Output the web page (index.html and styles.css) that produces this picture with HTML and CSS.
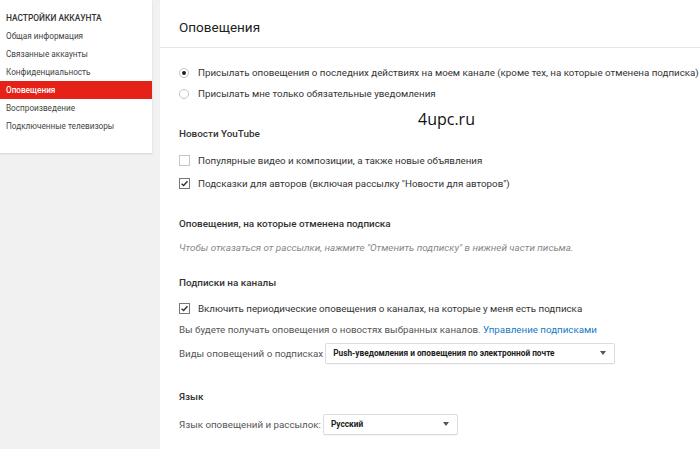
FILE: index.html
```html
<!DOCTYPE html>
<html lang="ru">
<head>
<meta charset="utf-8">
<link rel="stylesheet" href="styles.css">
</head>
<body>
<div class="page">
  <aside class="sidebar">
    <div class="side-panel">
      <div class="side-head">НАСТРОЙКИ АККАУНТА</div>
      <div class="side-item">Общая информация</div>
      <div class="side-item">Связанные аккаунты</div>
      <div class="side-item">Конфиденциальность</div>
      <div class="side-item active">Оповещения</div>
      <div class="side-item">Воспроизведение</div>
      <div class="side-item">Подключенные телевизоры</div>
    </div>
  </aside>
  <main class="main">
    <div class="title">Оповещения</div>
    <div class="content">
      <div class="watermark">4upc.ru</div>
      <div class="row radio-row first">
        <span class="radio checked"></span>
        <span>Присылать оповещения о последних действиях на моем канале (кроме тех, на которые отменена подписка)</span>
      </div>
      <div class="row radio-row">
        <span class="radio"></span>
        <span>Присылать мне только обязательные уведомления</span>
      </div>

      <div class="row heading h-news">Новости YouTube</div>
      <div class="row cb-row cb-first">
        <span class="cb"></span>
        <span>Популярные видео и композиции, а также новые объявления</span>
      </div>
      <div class="row cb-row">
        <span class="cb checked"><svg viewBox="0 0 10 10" width="9" height="9"><path d="M1.8 5.2 L4 7.3 L8.3 2.6" fill="none" stroke="#333" stroke-width="1.6"/></svg></span>
        <span>Подсказки для авторов (включая рассылку "Новости для авторов")</span>
      </div>

      <div class="row heading h-unsub">Оповещения, на которые отменена подписка</div>
      <div class="row note">Чтобы отказаться от рассылки, нажмите "Отменить подписку" в нижней части письма.</div>

      <div class="row heading h-subs">Подписки на каналы</div>
      <div class="row cb-row cb-subs">
        <span class="cb checked"><svg viewBox="0 0 10 10" width="9" height="9"><path d="M1.8 5.2 L4 7.3 L8.3 2.6" fill="none" stroke="#333" stroke-width="1.6"/></svg></span>
        <span>Включить периодические оповещения о каналах, на которые у меня есть подписка</span>
      </div>
      <div class="row text-row">Вы будете получать оповещения о новостях выбранных каналов.&nbsp;<a class="link">Управление подписками</a></div>
      <div class="row select-row sel-types">
        <span class="label">Виды оповещений о подписках</span>
        <span class="select wide"><span>Push-уведомления и оповещения по электронной почте</span><span class="caret"></span></span>
      </div>

      <div class="row heading h-lang">Язык</div>
      <div class="row select-row sel-lang">
        <span class="label">Язык оповещений и рассылок:</span>
        <span class="select narrow"><span>Русский</span><span class="caret"></span></span>
      </div>
    </div>
  </main>
</div>
</body>
</html>
```
FILE: styles.css
```css
* { box-sizing: border-box; }
html, body { margin: 0; padding: 0; }
body {
  width: 700px;
  height: 449px;
  overflow: hidden;
  background: #f1f1f1;
  font-family: Roboto, "Noto Sans", Arial, sans-serif;
  color: #333;
}
.page {
  display: flex;
  gap: 8px;
  height: 449px;
}
.sidebar {
  width: 152px;
  flex: none;
}
.side-panel {
  background: #fff;
  height: 153px;
  padding-top: 9px;
  box-shadow: 0 1px 2px rgba(0,0,0,0.12);
}
.side-head {
  font-size: 8.4px;
  font-weight: 500;
  color: #333;
  padding-left: 6px;
  height: 18px;
  line-height: 18px;
}
.side-item {
  font-size: 8.2px;
  color: #444;
  padding-left: 6px;
  height: 18px;
  line-height: 18px;
}
.side-item.active {
  background: #e62117;
  color: #fff;
  font-weight: 500;
}
.main {
  flex: 1;
  background: #fff;
  height: 449px;
}
.title {
  height: 48px;
  border-bottom: 1px solid #e6e6e6;
  padding-left: 19px;
  padding-top: 17px;
  font-size: 13.5px;
  line-height: 20px;
  color: #222;
}
.content {
  position: relative;
  padding-left: 19px;
}
.watermark {
  position: absolute;
  left: 258px;
  top: 46px;
  font-size: 16px;
  color: #111;
  font-family: "Open Sans", Roboto, sans-serif;
}
.row {
  display: flex;
  align-items: center;
  font-size: 9.75px;
  color: #333;
  white-space: nowrap;
}
.radio-row { height: 21px; }
.radio-row.first { margin-top: 14px; }
.radio {
  width: 10px;
  height: 10px;
  border-radius: 50%;
  border: 1px solid #c4c4c4;
  margin-right: 9px;
  flex: none;
  position: relative;
}
.radio.checked::after {
  content: "";
  position: absolute;
  left: 2px;
  top: 2px;
  width: 4px;
  height: 4px;
  border-radius: 50%;
  background: #222;
}
.heading {
  height: 20px;
  font-weight: 500;
  font-size: 9.9px;
  color: #333;
}
.h-news { margin-top: 19px; }
.h-unsub { margin-top: 18px; }
.h-subs { margin-top: 15px; }
.h-lang { margin-top: 22px; }
.cb-row { height: 23px; }
.cb-first { margin-top: 6px; }
.cb-subs { margin-top: 6px; height: 21px; }
.cb {
  width: 11px;
  height: 11px;
  border: 1px solid #c6c6c6;
  margin-right: 8px;
  flex: none;
  display: flex;
  align-items: center;
  justify-content: center;
  background: #fff;
}
.cb.checked { border-color: #777; }
.note {
  margin-top: 4px;
  height: 20px;
  font-style: italic;
  color: #888;
  font-size: 9.9px;
}
.text-row { height: 20px; color: #555; }
.link { color: #167ac6; }
.select-row { height: 22px; color: #555; }
.sel-types { margin-top: 3px; }
.sel-lang { margin-top: 7px; }
.label { margin-right: 2px; }
.select {
  height: 21px;
  border: 1px solid #dcdcdc;
  border-radius: 2px;
  display: flex;
  align-items: center;
  justify-content: space-between;
  padding: 0 8px 0 7px;
  font-size: 8.3px;
  font-weight: 700;
  color: #222;
  background: #fff;
  box-shadow: 0 1px 1px rgba(0,0,0,0.04);
}
.select.wide { width: 290px; }
.select.narrow { width: 135px; }
.caret {
  width: 0;
  height: 0;
  border-left: 3.5px solid transparent;
  border-right: 3.5px solid transparent;
  border-top: 4px solid #555;
}
```
